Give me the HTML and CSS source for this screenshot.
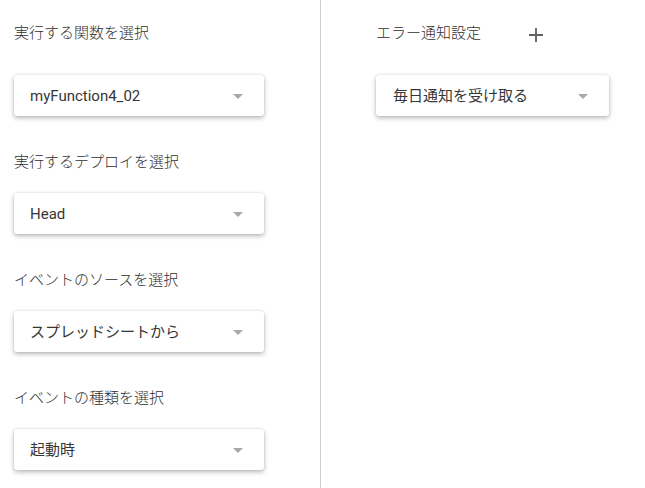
FILE: index.html
```html
<!DOCTYPE html>
<html lang="ja">
<head>
<meta charset="utf-8">
<link rel="stylesheet" href="styles.css">
</head>
<body>
<div class="page">
  <div class="col left">
    <div class="group first">
      <div class="label">実行する関数を選択</div>
      <div class="select"><span class="value">myFunction4_02</span><span class="arrow"></span></div>
    </div>
    <div class="group">
      <div class="label">実行するデプロイを選択</div>
      <div class="select"><span class="value">Head</span><span class="arrow"></span></div>
    </div>
    <div class="group">
      <div class="label">イベントのソースを選択</div>
      <div class="select"><span class="value">スプレッドシートから</span><span class="arrow"></span></div>
    </div>
    <div class="group">
      <div class="label">イベントの種類を選択</div>
      <div class="select"><span class="value">起動時</span><span class="arrow"></span></div>
    </div>
  </div>
  <div class="col right">
    <div class="group first">
      <div class="label-row">
        <div class="label">エラー通知設定</div>
        <svg class="plus" width="16" height="16" viewBox="0 0 16 16"><path d="M8 1v14M1 8h14" stroke="#5f5f5f" stroke-width="1.8" fill="none"/></svg>
      </div>
      <div class="select wide"><span class="value">毎日通知を受け取る</span><span class="arrow"></span></div>
    </div>
  </div>
</div>
</body>
</html>
```
FILE: styles.css
```css
html, body {
  margin: 0;
  padding: 0;
  background: #fff;
}
body {
  font-family: Roboto, "Noto Sans CJK JP", sans-serif;
  color: #212121;
}
.page {
  display: flex;
  width: 645px;
  height: 488px;
}
.col {
  display: flex;
  flex-direction: column;
  padding-top: 23px;
  box-sizing: border-box;
}
.left {
  width: 321px;
  padding-left: 14px;
  border-right: 1px solid #cfcfcf;
}
.right {
  padding-left: 55px;
}
.group {
  display: flex;
  flex-direction: column;
  margin-top: 36px;
}
.group.first {
  margin-top: 0;
}
.label {
  font-size: 15px;
  line-height: 20px;
  height: 20px;
  color: #2f2f2f;
  font-weight: 300;
  margin-bottom: 21px;
}
.group.first .label {
  margin-bottom: 32px;
}
.label-row {
  display: flex;
  align-items: flex-start;
}
.plus {
  margin-left: 47px;
  margin-top: 4px;
}
.select {
  width: 250px;
  height: 41px;
  box-sizing: border-box;
  display: flex;
  align-items: center;
  justify-content: space-between;
  padding: 0 21px 0 16px;
  background: #fff;
  border-radius: 3px;
  box-shadow: 0 2px 5px rgba(0, 0, 0, 0.28), 0 0 2px rgba(0, 0, 0, 0.12);
}
.select.wide {
  width: 233px;
  padding-left: 17px;
}
.value {
  font-size: 15px;
  line-height: 20px;
  color: #363636;
}
.arrow {
  width: 0;
  height: 0;
  border-left: 5px solid transparent;
  border-right: 5px solid transparent;
  border-top: 5px solid #a8a8a8;
  margin-top: 2px;
}
```
